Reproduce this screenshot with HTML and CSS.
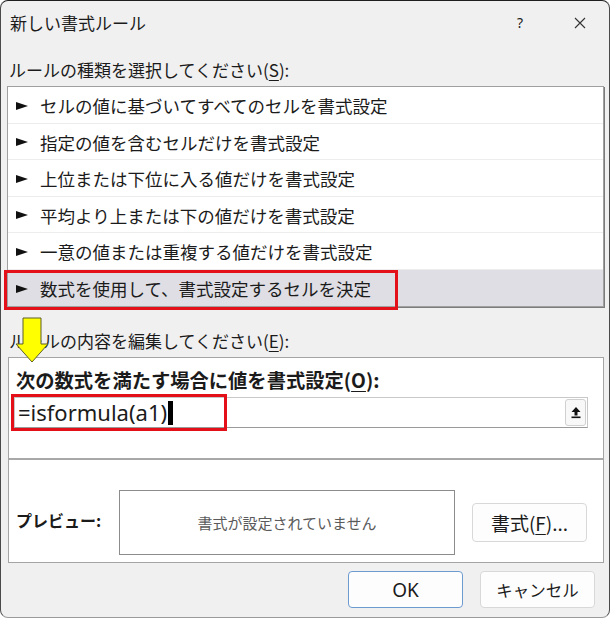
FILE: index.html
```html
<!DOCTYPE html>
<html lang="ja">
<head>
    <meta charset="UTF-8">
    <title>新しい書式ルール</title>
    <link rel="stylesheet" href="styles.css">
</head>
<body>

    <div class="dialog">
        <div class="titlebar">
            <span class="title">新しい書式ルール</span>
            <span class="help">?</span>
            <span class="close">
                <svg width="12" height="12" viewBox="0 0 12 12"><path d="M1 1L11 11M11 1L1 11" stroke="#333" stroke-width="1.1" fill="none"/></svg>
            </span>
        </div>

        <div class="body">
            <div class="label">ルールの種類を選択してください(<u>S</u>):</div>
            <ul class="rule-list">
                <li><svg class="tri" width="12" height="8" viewBox="0 0 12 8"><polygon points="0,0 12,4 0,8" fill="#111"/></svg>セルの値に基づいてすべてのセルを書式設定</li>
                <li><svg class="tri" width="12" height="8" viewBox="0 0 12 8"><polygon points="0,0 12,4 0,8" fill="#111"/></svg>指定の値を含むセルだけを書式設定</li>
                <li><svg class="tri" width="12" height="8" viewBox="0 0 12 8"><polygon points="0,0 12,4 0,8" fill="#111"/></svg>上位または下位に入る値だけを書式設定</li>
                <li><svg class="tri" width="12" height="8" viewBox="0 0 12 8"><polygon points="0,0 12,4 0,8" fill="#111"/></svg>平均より上または下の値だけを書式設定</li>
                <li><svg class="tri" width="12" height="8" viewBox="0 0 12 8"><polygon points="0,0 12,4 0,8" fill="#111"/></svg>一意の値または重複する値だけを書式設定</li>
                <li class="selected"><svg class="tri" width="12" height="8" viewBox="0 0 12 8"><polygon points="0,0 12,4 0,8" fill="#111"/></svg>数式を使用して、書式設定するセルを決定<span class="mark mark-rule"></span></li>
            </ul>

            <div class="label label-edit">
                ルールの内容を編集してください(<u>E</u>):
                <!-- yellow callout arrow -->
                <svg class="pointer" width="36" height="46" viewBox="0 0 36 46">
                    <polygon points="9,1 27,1 27,27 34,27 18,45 2,27 9,27" fill="#ffff00" stroke="#5e5e2a" stroke-width="1"/>
                </svg>
            </div>

            <div class="editor">
                <div class="editor-top">
                    <div class="bold-label">次の数式を満たす場合に値を書式設定(<u>O</u>):</div>
                    <div class="formula">
                        <span class="formula-text">=isformula(a1)</span><span class="caret"></span>
                        <span class="mark mark-formula"></span>
                        <button class="collapse">
                            <svg width="10" height="13" viewBox="0 0 10 13">
                                <polygon points="5,1 9.5,6 6.5,6 6.5,9.5 3.5,9.5 3.5,6 0.5,6" fill="#111"/>
                                <rect x="0.5" y="10.5" width="9" height="1.6" fill="#111"/>
                            </svg>
                        </button>
                    </div>
                </div>
                <div class="preview-row">
                    <span class="preview-label">プレビュー:</span>
                    <div class="preview-box">書式が設定されていません</div>
                    <button class="btn btn-format">書式(<u>F</u>)...</button>
                </div>
            </div>

            <div class="footer">
                <button class="btn btn-ok">OK</button>
                <button class="btn btn-cancel">キャンセル</button>
            </div>
        </div>
    </div>

</body>
</html>
```

FILE: styles.css
```css
* {
    margin: 0;
    padding: 0;
    box-sizing: border-box;
}
body {
    background-color: #fff;
    font-family: "Noto Sans CJK JP", sans-serif;
    color: #1b1b1b;
}
u {
    text-underline-offset: 3px;
    text-decoration-thickness: 1px;
}
.dialog {
    width: 610px;
    height: 618px;
    background: #f0f0f0;
    border: 1px solid #4a4a4a;
    border-top-color: #1e1e1e;
    border-bottom-color: #9a9a9a;
    border-radius: 8px;
    overflow: hidden;
}
.titlebar {
    height: 43px;
    display: flex;
    align-items: center;
    padding: 0 21px 0 9px;
}
.title {
    flex: 1;
    font-size: 17px;
}
.help {
    width: 16px;
    text-align: center;
    font-size: 14px;
    font-family: "Noto Sans", sans-serif;
    margin-right: 44px;
}
.close {
    width: 16px;
    height: 16px;
    display: flex;
    align-items: center;
    justify-content: center;
}
.body {
    padding: 0 5px 0 6px;
}
.label {
    margin-top: 14px;
    font-size: 17px;
    line-height: 24px;
    padding-left: 2px;
}
.rule-list {
    list-style: none;
    margin-top: 4px;
    background: #fff;
    border: 1px solid #a0a0a0;
    box-shadow: 1px 1px 0 #7c7c7c;
}
.rule-list li {
    position: relative;
    height: 36.5px;
    display: flex;
    align-items: center;
    padding: 2px 0 0 8px;
    font-size: 17.5px;
    border-bottom: 1px solid #ededed;
}
.rule-list li:last-child {
    border-bottom: none;
}
.rule-list li.selected {
    background: #dedee4;
}
.tri {
    margin-right: 12px;
    flex: none;
}
/* red highlight frames */
.mark {
    position: absolute;
    border: 3px solid #e3101a;
    pointer-events: none;
}
.mark-rule {
    left: -4px;
    top: 0;
    width: 394px;
    height: 40px;
}
.label-edit {
    position: relative;
    margin-top: 22px;
}
.pointer {
    position: absolute;
    left: 7px;
    top: -12px;
}
.editor {
    margin: 4px 0 0 1px;
    height: 206px;
    background: #fff;
    border: 1px solid #a5a5a5;
}
.editor-top {
    height: 102px;
    border-bottom: 2px solid #a8a8a8;
}
.bold-label {
    padding: 10px 0 0 7px;
    font-size: 19.3px;
    font-weight: bold;
    line-height: 24px;
}
.formula {
    position: relative;
    margin: 5px 0 0 5px;
    width: 574px;
    height: 31px;
    display: flex;
    align-items: center;
    border: 1px solid #c8c8c8;
    border-bottom-color: #9a9a9a;
    padding-left: 3px;
}
.formula-text {
    font-family: "Noto Sans", sans-serif;
    font-size: 22px;
    line-height: 29px;
}
.caret {
    width: 5px;
    height: 24px;
    background: #000;
    margin-left: 1px;
}
.mark-formula {
    left: -4px;
    top: -4px;
    width: 216px;
    height: 37px;
}
.collapse {
    margin-left: auto;
    margin-right: 1px;
    width: 21px;
    height: 27px;
    border: 1px solid #d0d0d0;
    border-radius: 3px;
    background: #f8f8f8;
    display: flex;
    align-items: center;
    justify-content: center;
}
.preview-row {
    height: 100px;
    padding: 24px 0 0 7px;
    display: flex;
    align-items: center;
}
.preview-label {
    width: 103px;
    font-size: 16px;
    font-weight: bold;
    margin-top: -4px;
}
.preview-box {
    width: 336px;
    height: 65px;
    border: 1px solid #8c8c8c;
    display: flex;
    align-items: center;
    justify-content: center;
    font-size: 15px;
    color: #5a5a5a;
}
.btn {
    font-family: "Noto Sans CJK JP", sans-serif;
    color: #1b1b1b;
    background: #fdfdfd;
    border: 1px solid #d8d8d8;
    border-radius: 4px;
    width: 115px;
    height: 37px;
}
.btn-format {
    margin-left: 17px;
    height: 39px;
    font-size: 19px;
}
.footer {
    display: flex;
    justify-content: flex-end;
    gap: 17px;
    margin: 8px 9px 0 0;
}
.btn-ok {
    border-color: #6d9bd0;
    font-family: "Noto Sans", sans-serif;
    font-size: 19px;
}
.btn-cancel {
    font-size: 16.5px;
}
```
